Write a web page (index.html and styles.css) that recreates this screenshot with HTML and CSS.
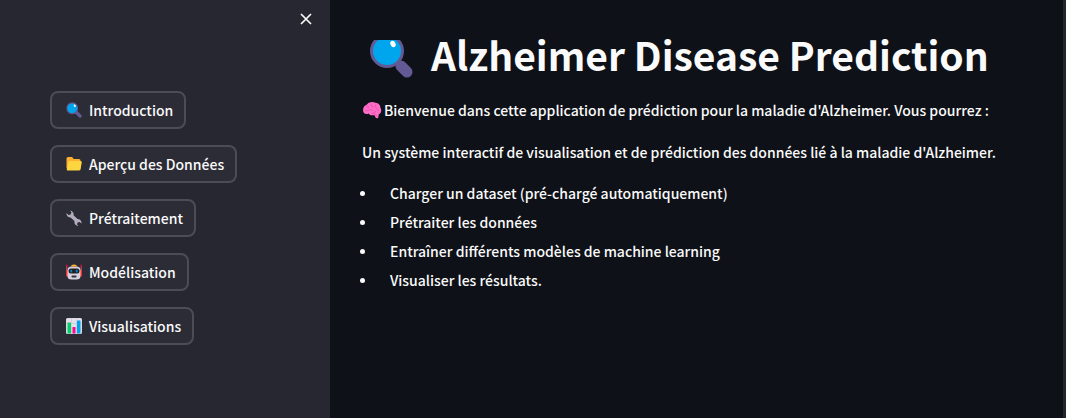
FILE: index.html
```html
<!DOCTYPE html>
<html lang="fr">
<head>
<meta charset="utf-8">
<meta name="viewport" content="width=device-width, initial-scale=1">
<title>Alzheimer Disease Prediction</title>
<link rel="stylesheet" href="styles.css">
</head>
<body>
<div class="app">
  <aside class="sidebar">
    <div class="sidebar-header">
      <button class="close" type="button" aria-label="Fermer">
        <svg viewBox="0 0 12 12" width="12" height="12"><path d="M1 1l10 10M11 1L1 11" stroke="#fafafa" stroke-width="1.7" fill="none"/></svg>
      </button>
    </div>
    <nav class="nav">
      <button class="nav-button" type="button">
        <svg class="icon" viewBox="0 0 32 32"><path d="M20 20l8 8" stroke="#635994" stroke-width="6.5" stroke-linecap="round"/><circle cx="12.5" cy="12.5" r="10.7" fill="#00a6ed" stroke="#635994" stroke-width="2.2"/><ellipse cx="17.5" cy="7.5" rx="2" ry="2.5" fill="#fff" transform="rotate(-25 17.5 7.5)"/></svg>
        Introduction
      </button>
      <button class="nav-button" type="button">
        <svg class="icon" viewBox="0 0 32 32"><path d="M1 5q0-3 3-3h7q2 0 3 2l1 2h11q3 0 3 3v16H3q-2 0-2-2z" fill="#ffb02e"/><path d="M8 10h21q3 0 2.500 3l-2.500 14q-.5 2-3 2H3q-2 0-1.500-2.500L5 12.500Q5.500 10 8 10z" fill="#fcd53f"/></svg>
        Aperçu des Données
      </button>
      <button class="nav-button" type="button">
        <svg class="icon" viewBox="0 0 32 32"><path d="M8 1a8 8 0 0 1 7 10l8 7a8 8 0 0 1 8 9l-4-3-4 1-1 4 3 3a8 8 0 0 1-8-10l-8-7A8 8 0 0 1 1 6l4 4 4-1 2-4z" fill="#b4acbc"/><path d="M12 12l10 9" stroke="#b4acbc" stroke-width="5"/></svg>
        Prétraitement
      </button>
      <button class="nav-button" type="button">
        <svg class="icon" viewBox="0 0 32 32"><path d="M1.500 4v16M30.500 4v16" stroke="#e8474c" stroke-width="2"/><circle cx="1.800" cy="3" r="1.800" fill="#ca0b4a"/><circle cx="30.200" cy="3" r="1.800" fill="#ca0b4a"/><rect x="0" y="12" width="6" height="13" rx="2" fill="#f8312f"/><rect x="26" y="12" width="6" height="13" rx="2" fill="#f8312f"/><path d="M3 12q0-7 8-7h10q8 0 8 7v12q0 7-8 7H11q-8 0-8-7z" fill="#d5cfdf"/><path d="M10 5q0-4 6-4t6 4z" fill="#ffb02e"/><rect x="5" y="9" width="22" height="10" rx="5" fill="#212121"/><ellipse cx="10.500" cy="14" rx="2" ry="3" fill="#0084ce"/><ellipse cx="21.500" cy="14" rx="2" ry="3" fill="#0084ce"/><rect x="11" y="23" width="10" height="4" rx="1.500" fill="#333"/></svg>
        Modélisation
      </button>
      <button class="nav-button" type="button">
        <svg class="icon" viewBox="0 0 32 32"><rect width="32" height="32" rx="3" fill="#d3d3d3"/><rect x="1" y="1" width="30" height="30" rx="2" fill="#e6dfee"/><path d="M1 11h30M1 21h30M11 1v30M21 1v30" stroke="#cdc4d6" stroke-width="1.500"/><path d="M3 31V10q0-1 1-1h5q1 0 1 1v21z" fill="#00d26a"/><path d="M13 31V19q0-1 1-1h4q1 0 1 1v12z" fill="#f70a8d"/><path d="M22 31V6q0-1 1-1h5q1 0 1 1v25z" fill="#00a6ed"/></svg>
        Visualisations
      </button>
    </nav>
  </aside>
  <main class="main">
    <h1 class="title">
      <svg class="title-icon" viewBox="0 3 46 38"><path d="M32 29l6 6" stroke="#635994" stroke-width="11" stroke-linecap="round"/><circle cx="18" cy="14" r="15.500" fill="#00a6ed" stroke="#635994" stroke-width="3"/><ellipse cx="24" cy="7" rx="2.500" ry="3.300" fill="#fff" transform="rotate(-25 24 7)"/></svg>
      Alzheimer Disease Prediction
    </h1>
    <p class="text intro">
      <svg class="brain" viewBox="0 0 34 32"><path d="M2 20C-1 13 4 7 8 6c4-5 11-5 15-3 6 0 9 5 9 9 3 5 1 10-3 12l-1 6q-3 2-5-1l-2-4c-5 1-8 0-10-3-4 2-8 1-9-2z" fill="#ff6dc6"/><path d="M7 9q4-1 4 3M5 17q4 2 7-1t7 1M15 5q-1 5 4 5M24 6q-4 4 1 7t4 4M17 22q6 1 7-4M22 24l3 2" fill="none" stroke="#e84fb0" stroke-width="1.600" stroke-linecap="round"/></svg>Bienvenue dans cette application de prédiction pour la maladie d'Alzheimer. Vous pourrez :
    </p>
    <p class="text">Un système interactif de visualisation et de prédiction des données lié à la maladie d'Alzheimer.</p>
    <ul class="list">
      <li>Charger un dataset (pré-chargé automatiquement)</li>
      <li>Prétraiter les données</li>
      <li>Entraîner différents modèles de machine learning</li>
      <li>Visualiser les résultats.</li>
    </ul>
  </main>
</div>
</body>
</html>
```
FILE: styles.css
```css
* {
  box-sizing: border-box;
}

body {
  margin: 0;
  background: #0e1117;
  color: #fafafa;
  font-family: "Noto Sans CJK SC", "Noto Sans", sans-serif;
  font-size: 14px;
  font-weight: 500;
  line-height: 26px;
}

.app {
  display: flex;
  min-height: 100vh;
}

.sidebar {
  flex: 0 0 330px;
  background: #262730;
}

.sidebar-header {
  display: flex;
  justify-content: flex-end;
  padding: 13px 18px 0;
}

.close {
  display: flex;
  padding: 0;
  border: 0;
  background: none;
  cursor: pointer;
}

.nav {
  display: flex;
  flex-direction: column;
  align-items: flex-start;
  gap: 16px;
  padding: 66px 50px 0;
}

.nav-button {
  display: flex;
  align-items: center;
  gap: 7px;
  height: 38px;
  padding: 0 11px 1px 14px;
  border: 2px solid #4b4c55;
  border-radius: 8px;
  background: #2b2c36;
  color: inherit;
  font: inherit;
  white-space: nowrap;
  cursor: pointer;
}

.icon {
  width: 16px;
  height: 16px;
}

.main {
  flex: 1;
  min-width: 0;
  padding: 29px 28px 32px 32px;
  border-right: 3px solid #22252b;
}

.title {
  display: flex;
  align-items: center;
  gap: 16px;
  margin: 0 0 18px;
  padding-left: 7px;
  font-size: 39px;
  font-weight: 700;
  line-height: 50px;
}

.title-icon {
  width: 46px;
  height: 38px;
  margin-top: 10px;
}

.text {
  margin: 0 0 16px;
}

.intro {
  display: flex;
  align-items: center;
  gap: 2px;
}

.brain {
  flex: none;
  width: 20px;
  height: 18px;
}

.list {
  margin: -2px 0 0;
  padding: 0;
  line-height: 29px;
  list-style: none;
}

.list li {
  display: flex;
  align-items: center;
  gap: 25px;
}

.list li::before {
  content: "";
  width: 5px;
  height: 5px;
  margin-left: -2px;
  border-radius: 50%;
  background: #fafafa;
}
```
